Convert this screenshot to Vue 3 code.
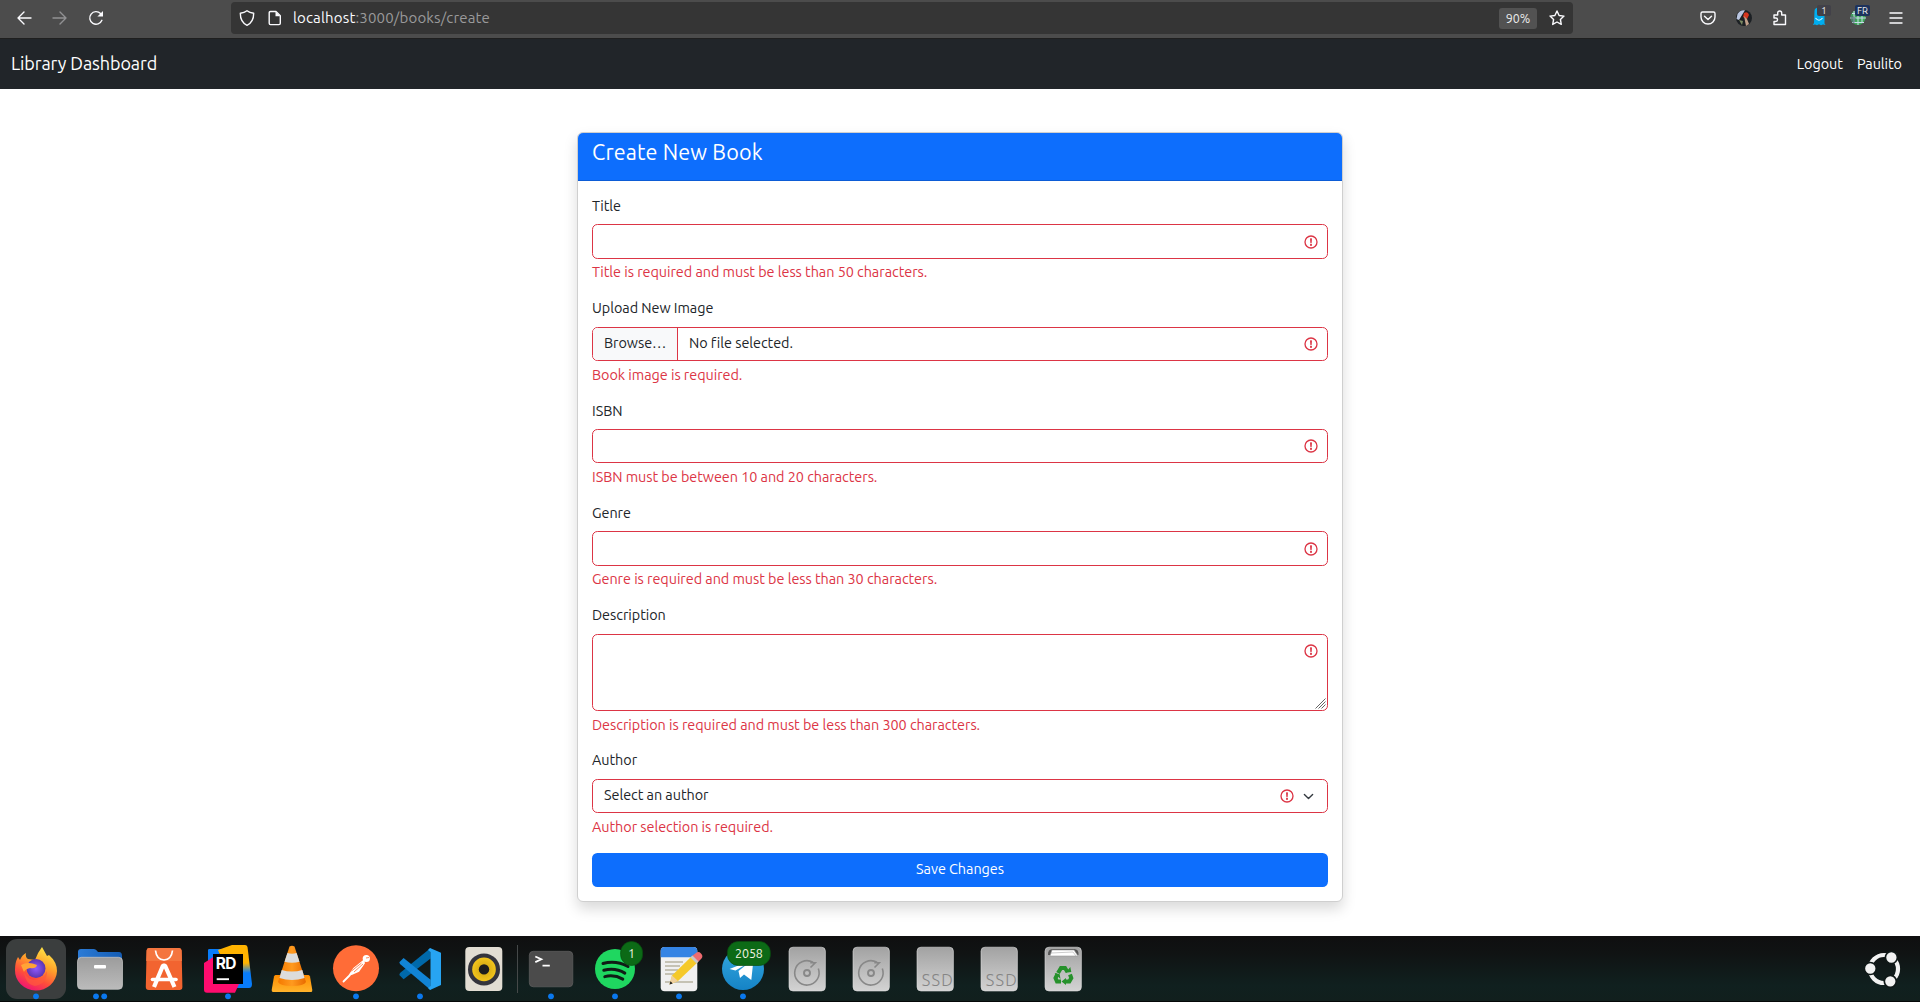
<script setup>
const fields = [
  { id: 'title', label: 'Title', kind: 'text', error: 'Title is required and must be less than 50 characters.' },
  { id: 'image', label: 'Upload New Image', kind: 'file', error: 'Book image is required.' },
  { id: 'isbn', label: 'ISBN', kind: 'text', error: 'ISBN must be between 10 and 20 characters.' },
  { id: 'genre', label: 'Genre', kind: 'text', error: 'Genre is required and must be less than 30 characters.' },
  { id: 'description', label: 'Description', kind: 'area', error: 'Description is required and must be less than 300 characters.' },
  { id: 'author', label: 'Author', kind: 'select', error: 'Author selection is required.' },
]
</script>

<template>
  <div class="screen">
    <header class="toolbar">
      <div class="nav-buttons">
        <svg class="ic" viewBox="0 0 16 16"><path d="M15 8H2M8 2 2 8l6 6" /></svg>
        <svg class="ic dim" viewBox="0 0 16 16"><path d="M1 8h13M8 2l6 6-6 6" /></svg>
        <svg class="ic" viewBox="0 0 16 16"><path d="M13.9 10.3A6.3 6.3 0 1 1 12.6 3.6L14 5" /><path class="solid" d="M15 1v5.6H9.4z" /></svg>
      </div>
      <div class="urlbar">
        <svg class="ic shield" viewBox="0 0 16 16"><path d="M8 .8C6.300 2.100 3.700 3 1.300 3.300c0 5.600 1.700 9.700 6.700 12 5-2.300 6.700-6.400 6.700-12C12.300 3 9.700 2.100 8 .8z" /></svg>
        <svg class="ic page" viewBox="0 0 16 16"><path d="M3.500 1.500h5.500l4.300 4.300v7.500q0 1.300-1.300 1.300H3.500q-1.300 0-1.300-1.300V2.800q0-1.300 1.300-1.300z" /><path class="solid" d="M8.500 1.500v4.800h4.800z" /></svg>
        <span class="url"><b>localhost</b>:3000/books/create</span>
        <span class="zoom">90%</span>
        <svg class="ic star" viewBox="0 0 16 16"><path d="m8 1 2.100 4.500 4.900.6-3.600 3.400.9 4.900L8 12l-4.300 2.400.9-4.900L1 6.100l4.900-.6z" /></svg>
      </div>
      <div class="extensions">
        <svg class="ic" viewBox="0 0 16 16"><path d="M2.500 2h11q1.500 0 1.500 1.500V7a7 7 0 0 1-14 0V3.500Q1 2 2.500 2zM4.500 6.200 8 9.500l3.500-3.300" /></svg>
        <svg class="ic avatar" viewBox="0 0 16 16">
          <circle cx="8" cy="8" r="8" fill="#1c2024" />
          <path d="M1.500 4Q4-.5 9 .3L6 5 3 10 .5 9z" fill="#b9c5e0" />
          <path d="M8 3q4-2 5 2l-2 4-4-2z" fill="#d4351f" />
          <path d="m8 6 3 3 2 5-3 2z" fill="#c1a08a" />
          <path d="m3 10 4 1-1 4z" fill="#7c8a63" />
        </svg>
        <svg class="ic" viewBox="0 0 16 16"><path d="M2 5h3.700V3a2 2 0 0 1 4 0v2h3.800v9.500H2v-3h1.800a1.700 1.700 0 0 0 0-3.500H2z" /></svg>
        <svg class="ext" viewBox="0 0 22 24">
          <path d="M4.500 8q0-3.500 4.500-3.500t5.500 4V20.500L15.500 22l-2.500-.6-2 .9-2-1-2 1-2-.9-2.200.6 1.200-2z" fill="#00aef0" />
          <path d="M5.500 15q3.500 4.500 7 0" fill="none" stroke="#d7f3ff" stroke-width="1.200" />
          <rect x="7" y="2" width="14" height="11" rx="2" fill="#424149" />
          <text x="14" y="11" class="tag">1</text>
        </svg>
        <svg class="ext" viewBox="0 0 22 24">
          <circle cx="9" cy="14.500" r="7.500" fill="#3fa85a" />
          <path d="M1 15h16M3 10.500h13M3 19.500h12M9 7v15M5 8v12M13 8v12" fill="none" stroke="#c9dbea" stroke-width="1" />
          <path d="M2 12a8 8 0 0 0 3 9l2-6z" fill="#567" opacity=".6" />
          <rect x="6" y="2" width="15" height="11" rx="2" fill="#1d325c" />
          <text x="13.500" y="11" class="tag">FR</text>
        </svg>
        <svg class="ic" viewBox="0 0 16 16"><path d="M2 3h12M2 8h12M2 13h12" /></svg>
      </div>
    </header>

    <nav class="navbar">
      <span class="brand">Library Dashboard</span>
      <span class="links"><a class="logout">Logout</a><a class="user">Paulito</a></span>
    </nav>

    <main class="page-body">
      <section class="card">
        <h1 class="card-header">Create New Book</h1>
        <form class="card-body">
          <div v-for="f in fields" :key="f.id" class="field" :class="f.id">
            <label class="label">{{ f.label }}</label>
            <div class="control" :class="f.kind">
              <template v-if="f.kind === 'file'">
                <span class="browse">Browse…</span><span class="filename">No file selected.</span>
              </template>
              <span v-if="f.kind === 'select'" class="choice">Select an author</span>
              <svg class="warn" viewBox="0 0 12 12"><circle cx="6" cy="6" r="4.500" /><path class="solid" d="M5.800 3.600h.4L6 6.500z" /><circle class="solid" cx="6" cy="8.200" r=".3" /></svg>
              <svg v-if="f.kind === 'select'" class="chevron" viewBox="0 0 16 16"><path d="m2 5 6 6 6-6" /></svg>
              <svg v-if="f.kind === 'area'" class="grip" viewBox="0 0 11 11"><path d="M.5 10.500l10-10M3.500 10.500l7-7M6.500 10.500l4-4" /></svg>
            </div>
            <div class="error">{{ f.error }}</div>
          </div>
          <button type="button" class="save">Save Changes</button>
        </form>
      </section>
    </main>

    <footer class="dock">
      <svg width="0" height="0" class="defs">
        <defs>
          <linearGradient id="fx" x1=".8" y1="0" x2=".3" y2="1"><stop offset="0" stop-color="#fff04a" /><stop offset=".4" stop-color="#ffa02a" /><stop offset=".7" stop-color="#ff4e3a" /><stop offset="1" stop-color="#ee1275" /></linearGradient>
          <radialGradient id="globe"><stop offset="0" stop-color="#9059ff" /><stop offset="1" stop-color="#5b35b0" /></radialGradient>
          <linearGradient id="silver" x1="0" y1="0" x2="0" y2="1"><stop offset="0" stop-color="#a2a2a2" /><stop offset="1" stop-color="#d3d3d3" /></linearGradient>
          <linearGradient id="folder" x1="0" y1="0" x2="0" y2="1"><stop offset="0" stop-color="#9c9c9c" /><stop offset="1" stop-color="#bbb" /></linearGradient>
          <linearGradient id="blue" x1="0" y1="0" x2="1" y2="0"><stop offset="0" stop-color="#2b7bd6" /><stop offset="1" stop-color="#145cb3" /></linearGradient>
          <linearGradient id="cone" x1="0" y1="0" x2="1" y2="0"><stop offset="0" stop-color="#f57900" /><stop offset=".5" stop-color="#ff9a1f" /><stop offset="1" stop-color="#e86a00" /></linearGradient>
          <linearGradient id="plate" x1="0" y1="0" x2="0" y2="1"><stop offset="0" stop-color="#ff8c00" /><stop offset="1" stop-color="#ffb32b" /></linearGradient>
          <linearGradient id="rider" x1="0" y1="0" x2="0" y2="1"><stop offset="0" stop-color="#ffb300" /><stop offset=".42" stop-color="#ffb300" /><stop offset=".65" stop-color="#087cfa" /></linearGradient>
          <linearGradient id="tele" x1="0" y1="0" x2="0" y2="1"><stop offset="0" stop-color="#35a9e0" /><stop offset="1" stop-color="#1583c6" /></linearGradient>
          <radialGradient id="speaker"><stop offset="0" stop-color="#caa010" /><stop offset="1" stop-color="#f2c41c" /></radialGradient>
        </defs>
      </svg>

      <svg class="app" viewBox="0 0 64 66">
        <rect x="2" y="3" width="60" height="60" rx="11" fill="#3b3e3e" />
        <path d="M11 34q0-8 3-13l2 3q2-5 6-7-1 4 2 6l7 1q3-8 7-13l5 9 2-1q8 7 8 16A21 20 0 0 1 11 34z" fill="url(#fx)" />
        <circle cx="32" cy="32.500" r="9.500" fill="url(#globe)" />
        <path d="M17 29q7-4 16 0-1 4-7 3-5 1-6 4z" fill="#ffa436" />
        <path d="M20 33q0 9 10 11 10-1 13-9 0 13-12 15-11-2-11-17z" fill="#ff5a3c" opacity=".7" />
        <circle cx="32" cy="60.300" r="2.900" class="dot" />
      </svg>
      <svg class="app" viewBox="0 0 64 66">
        <path d="M10 25V16q0-3 3-3h13q2 0 4 3h21q3 0 3 4v8z" fill="url(#blue)" />
        <rect x="9.500" y="21.300" width="45" height="32" rx="4" fill="url(#folder)" stroke="#cacaca" stroke-width=".7" />
        <rect x="26" y="29" width="12" height="3.400" rx="1" fill="#fff" />
        <circle cx="28" cy="60.300" r="2.900" class="dot" /><circle cx="36.200" cy="60.300" r="2.900" class="dot" />
      </svg>
      <svg class="app" viewBox="0 0 64 66">
        <path d="M17 12h30q2.500 0 2.600 2.500L50.400 51q0 3-3 3H16.800q-3 0-3-3L14.600 14.500Q14.600 12 17 12z" fill="#f26430" />
        <path d="M17 12h30q2.500 0 2.600 2.500L50 25H14.200l.4-10.500Q14.600 12 17 12z" fill="#f4753f" />
        <path d="M23.500 14.500q1 9 8.500 9.500 7.500-.5 8.500-9.500" fill="none" stroke="#fff" stroke-width="1.700" />
        <path d="M22 51 31 29.500h2L42.500 51" fill="none" stroke="#fff" stroke-width="4.200" stroke-linejoin="bevel" />
        <path d="M20.500 43.500h23.500" stroke="#fff" stroke-width="3.600" stroke-linecap="round" />
      </svg>
      <svg class="app" viewBox="0 0 64 66">
        <path d="M12 14q0-1 1.500-1H27L15 28h-3z" fill="#087cfa" />
        <path d="M22 14 36 9h13q2 0 2.500 2L56 48q0 4-3 4H38z" fill="url(#rider)" />
        <path d="m8 27 14-9 21 30-4 8.700H11q-3 0-3-3z" fill="#ff0c6e" />
        <rect x="17" y="18" width="30" height="30" />
        <text x="19.700" y="33.200" class="rd">RD</text>
        <path d="M20.700 43.200H33" stroke="#fff" stroke-width="1.900" />
        <circle cx="32" cy="60.300" r="2.900" class="dot" />
      </svg>
      <svg class="app" viewBox="0 0 64 66">
        <path d="M15.500 39h33q1 0 1.500 1.500L52.300 54q0 2-1 2H13q-1.500 0-1.300-2L14 40.500q.5-1.500 1.500-1.500z" fill="url(#plate)" />
        <path d="M29.500 10.500q2.500-1.500 5 0L46 46q-2 4-14 4T18 46z" fill="url(#cone)" />
        <path d="m27.400 17-2.900 8.700q7.500 2 15 0L36.600 17q-4.600 1.600-9.200 0zM21.700 34l-2.200 8q12.500 4 25 0l-2.200-8q-10.300 3-20.600 0z" fill="#dcdcdc" />
      </svg>
      <svg class="app" viewBox="0 0 64 66">
        <circle cx="32" cy="32.300" r="23" fill="#ff6c37" />
        <circle cx="42.300" cy="22.500" r="3.600" fill="#fff" />
        <path d="m39.500 25-9.500 7.500-4 6 2-.5 6.500-3 5.500-8zM26 39l-6.500 6.500" fill="#fff" stroke="#fff" stroke-width="1.800" stroke-linecap="round" />
        <path d="m27.500 35 10-8M30 36l9-8M42 22l3-.5" stroke="#ff6c37" stroke-width=".8" />
        <circle cx="32" cy="60.300" r="2.900" class="dot" />
      </svg>
      <svg class="app" viewBox="0 0 64 66">
        <path d="m11.300 39 4.300 4.300 27-20.800V12L12 37z" fill="#0069aa" />
        <path d="m11.300 26.300 4.300-4.200 27 21.600v10.200L12 28z" fill="#1184d6" />
        <path d="M42 12 53 16.700V49L42 54l-2-2 2.500-2V16L40 14z" fill="#27a4f2" />
        <circle cx="32" cy="60.300" r="2.900" class="dot" />
      </svg>
      <svg class="app" viewBox="0 0 64 66">
        <rect x="13.300" y="11" width="37" height="44" rx="4" fill="#e2ddd3" />
        <circle cx="32" cy="33.400" r="16" fill="#34343c" />
        <circle cx="32" cy="33.400" r="11.800" fill="url(#speaker)" />
        <circle cx="32" cy="33.400" r="5.200" fill="#1d1d1d" />
      </svg>
      <span class="divider"></span>
      <svg class="app" viewBox="0 0 64 66">
        <rect x="10.300" y="15.300" width="43.500" height="35.500" rx="4" fill="#4b4b4b" stroke="#626262" stroke-width=".7" />
        <path d="m16.300 20.500 6 2.800-6 2.800M23.500 29.700h7.300" fill="none" stroke="#fff" stroke-width="1.800" />
        <circle cx="32" cy="60.300" r="2.900" class="dot" />
      </svg>
      <svg class="app" viewBox="0 0 64 66">
        <circle cx="32" cy="33" r="20" fill="#1fd760" />
        <path d="M20 27.500q13-3.500 25 3M20.800 34.300q11.500-3 21 2.800M21.800 40.600q9.500-2.300 18 2.500" fill="none" stroke="#101c16" stroke-width="3" stroke-linecap="round" />
        <rect x="37.600" y="5.500" width="22" height="24" rx="11" class="badge" />
        <text x="48.600" y="22" class="count">1</text>
        <circle cx="32" cy="60.300" r="2.900" class="dot" />
      </svg>
      <svg class="app" viewBox="0 0 64 66">
        <rect x="13.700" y="11" width="36.600" height="44.300" rx="4" fill="#f0f0f0" />
        <path d="M13.700 21.200V15q0-4 4-4h28.600q4 0 4 4v6.200z" fill="#3584e4" />
        <path d="M18 26h18M18 30h15M18 34h13M18 38h12M18 46h28" stroke="#c5c2b4" stroke-width="1.800" />
        <path d="m22.500 48.500 2.500-9 20-19.500 6 6-20 19z" fill="#f5c92a" />
        <path d="m25 39.500 6 5.500-8.500 3.500z" fill="#efd0a0" /><path d="m22.500 48.500 1-3.300 2.200 2.200z" fill="#222" />
        <path d="m45 20 2.500 2.500 3.500 3.500 3.500-3.500q2-2.500-.5-5t-5-.5z" fill="#ee6b70" /><path d="m43.500 21.500 6 6 2-2-6-6z" fill="#c8c8c8" />
        <circle cx="32" cy="60.300" r="2.900" class="dot" />
      </svg>
      <svg class="app" viewBox="0 0 64 66">
        <circle cx="32" cy="33" r="21" fill="url(#tele)" />
        <path d="m18.500 33 24-9.500-2.200 20.500-7.300-5.500-4 3.500-1.500-7 10-8-13 7.500z" fill="#fff" />
        <rect x="16.400" y="5.500" width="43" height="24" rx="11" class="badge" />
        <text x="37.900" y="22" class="count">2058</text>
        <circle cx="32" cy="60.300" r="2.900" class="dot" />
      </svg>
      <svg v-for="n in 2" :key="'hdd' + n" class="app" viewBox="0 0 64 66">
        <rect x="14" y="11.200" width="36.400" height="43.800" rx="4" fill="url(#silver)" stroke="#dedede" stroke-width=".6" />
        <path d="M43.300 32.500A12.200 12.200 0 1 1 38 26.300M35.500 31.500l4.800-4.800h-5" fill="none" stroke="#888" stroke-width="1.600" />
        <circle cx="32" cy="37" r="3" fill="none" stroke="#888" stroke-width="1.900" />
      </svg>
      <svg v-for="n in 2" :key="'ssd' + n" class="app" viewBox="0 0 64 66">
        <rect x="14" y="11.200" width="36.400" height="43.800" rx="4" fill="url(#silver)" stroke="#dedede" stroke-width=".6" />
        <text x="18.800" y="49.600" class="ssd" textLength="31">SSD</text>
      </svg>
      <svg class="app" viewBox="0 0 64 66">
        <rect x="14" y="11.200" width="36.400" height="43.800" rx="4" fill="url(#silver)" stroke="#dedede" stroke-width=".6" />
        <path d="M17 19q-.5-6 5-6h21q5 0 4.500 6z" fill="#555" /><path d="m19 20 2-6h22l4 6z" fill="#fff" stroke="#999" stroke-width=".6" /><path d="m20 17 22-1 3 4" fill="none" stroke="#aaa" stroke-width=".6" />
        <g fill="none" stroke="#26912b" stroke-width="4">
          <path d="m27 37 3-5h4l2.500 4" /><path d="m39 38.500 1.300 3.500-2 3.500h-4" /><path d="M30 45.500h-4L24.500 42l2-4" />
        </g>
        <path d="m34.500 36.800 5.800-.8-1-5zM35 42l-4.500 3.500 4.500 3.500zM23.500 37l5.200 1.300.8 4.700z" fill="#26912b" />
      </svg>
      <svg class="launcher" viewBox="0 0 40 40">
        <circle cx="20" cy="20" r="14" fill="none" stroke="#f2f2f2" stroke-width="4.200" />
        <g fill="#f2f2f2" stroke="#0f1817" stroke-width="1.700"><circle cx="27.400" cy="8.500" r="6" /><circle cx="6.300" cy="19.500" r="6" /><circle cx="26.300" cy="32.300" r="6" /></g>
      </svg>
    </footer>
  </div>
</template>

<style>
body { margin: 0; overflow: hidden; }
</style>

<style scoped>
.screen {
  display: flex; flex-direction: column; width: 1920px; height: 1002px; overflow: hidden;
  background: #fff; color: #212529; font: 14.4px/22px Ubuntu, "Noto Sans", sans-serif; letter-spacing: -.04px;
}
.ic { width: 16px; height: 16px; flex: none; fill: none; stroke: #fbfbfe; stroke-width: 1.400; stroke-linecap: round; stroke-linejoin: round; overflow: visible; }
.ic .solid { fill: #fbfbfe; stroke: none; }
.dim { opacity: .4; }

.toolbar { height: 39px; box-sizing: border-box; display: flex; background: #4c4c4c; border-bottom: 1px solid #1f1f1f; flex: none; }
.nav-buttons { display: flex; gap: 20px; align-items: center; padding-left: 16px; width: 215px; height: 36px; }
.urlbar { display: flex; align-items: center; margin-top: 2px; width: 1342px; height: 32px; border-radius: 4px; background: #353535; }
.shield { margin-left: 8px; }
.page { margin-left: 12px; }
.url { margin-left: 10px; color: #9a9a9b; font-size: 15px; letter-spacing: .16px; flex: 1; }
.url b { font-weight: 400; color: #fbfbfe; }
.zoom { width: 38px; height: 21px; border-radius: 3px; background: #525252; color: #ececec; font-size: 12.500px; line-height: 21px; text-align: center; letter-spacing: 0; }
.star { margin: 0 8px 0 12px; }
.extensions { display: flex; align-items: center; height: 36px; margin-left: 127px; gap: 20px; }
.avatar { stroke: none; }
.ext { width: 22px; height: 24px; margin: -7px -5px 0 2px; }
.ext + .ext { margin-left: 2px; }
.ext + .ic { margin-left: 2px; }
.tag { font-size: 9.500px; fill: #f1f1f1; text-anchor: middle; letter-spacing: 0; }

.navbar { height: 50px; display: flex; align-items: center; justify-content: space-between; padding: 0 18px 0 11px; background: #212529; color: #fff; flex: none; }
.brand { padding-bottom: 2px; font-size: 18px; letter-spacing: -.1px; }
.links { display: flex; gap: 14px; }

.page-body { flex: 1; display: flex; justify-content: center; align-items: flex-start; padding-top: 43px; }
.card { width: 766px; height: 770px; box-sizing: border-box; border: 1px solid #cfcfcf; border-radius: 6px; background: #fff; box-shadow: 0 7px 14px rgba(0, 0, 0, .15); overflow: hidden; }
.card-header { box-sizing: border-box; height: 48px; margin: 0; padding: 6px 14px; border-bottom: 1px solid #0c5cd6; background: #0d6efd; color: #fff; font-size: 21.6px; line-height: 26px; font-weight: 400; letter-spacing: .14px; }
.card-body { padding: 14px; }
.field { height: 102px; }
.title, .genre, .author { height: 103px; }
.description { height: 145px; }
.label { display: block; height: 29px; line-height: 22px; }
.image .label, .description .label, .author .label { line-height: 20px; }
.control { position: relative; box-sizing: border-box; height: 34px; border: 1px solid #dc3545; border-radius: 5.400px; display: flex; align-items: center; overflow: hidden; }
.title .control, .genre .control { height: 35px; }
.control.area { height: 77px; align-items: flex-start; }
.warn { width: 16px; height: 16px; margin: 0 8px 0 auto; fill: none; stroke: #dc3545; flex: none; }
.warn path { stroke-linejoin: round; }
.warn .solid { fill: #dc3545; }
.area .warn { margin-top: 8px; }
.select .warn { margin-right: 8px; }
.chevron { width: 11px; height: 11px; margin-right: 13px; fill: none; stroke: #343a40; stroke-width: 2; stroke-linecap: round; stroke-linejoin: round; }
.grip { position: absolute; right: 1px; bottom: 1px; width: 11px; height: 11px; fill: none; stroke: #666; stroke-width: 1; }
.browse { box-sizing: border-box; width: 85px; height: 32px; padding: 4px 0 0 11px; border-right: 1px solid #dc3545; background: #f8f9fa; }
.filename, .choice { height: 24px; margin-left: 11px; }
.error { margin-top: 3px; color: #dc3545; }
.title .error, .genre .error { margin-top: 2px; }
.save { display: block; width: 736px; height: 34px; padding: 0 0 2px; border: 0; border-radius: 5.400px; background: #0d6efd; color: #fff; font: inherit; letter-spacing: inherit; }

.dock { height: 66px; flex: none; display: flex; padding-left: 4px; box-sizing: border-box; background: linear-gradient(#0f0f10 0, #101313 25%, #10201f 75%, #111f1d 98%, #050808 98%); }
.defs { position: absolute; }
.app { width: 64px; height: 66px; flex: none; }
.dot { fill: #0a78ee; }
.divider { width: 1px; height: 48px; margin: 9px 1px 0; background: #454949; }
.badge { fill: #0c6a16; stroke: #084d10; stroke-width: .7; }
.count { fill: #f4f4e4; font-size: 12.500px; text-anchor: middle; letter-spacing: -.1px; }
.rd { fill: #fff; font: 700 15.500px Inter, sans-serif; letter-spacing: -.6px; }
.ssd { fill: #858585; font-size: 16.500px; font-weight: 300; letter-spacing: 0; }
.launcher { width: 40px; height: 40px; margin: 13px 16px 0 auto; }
</style>
